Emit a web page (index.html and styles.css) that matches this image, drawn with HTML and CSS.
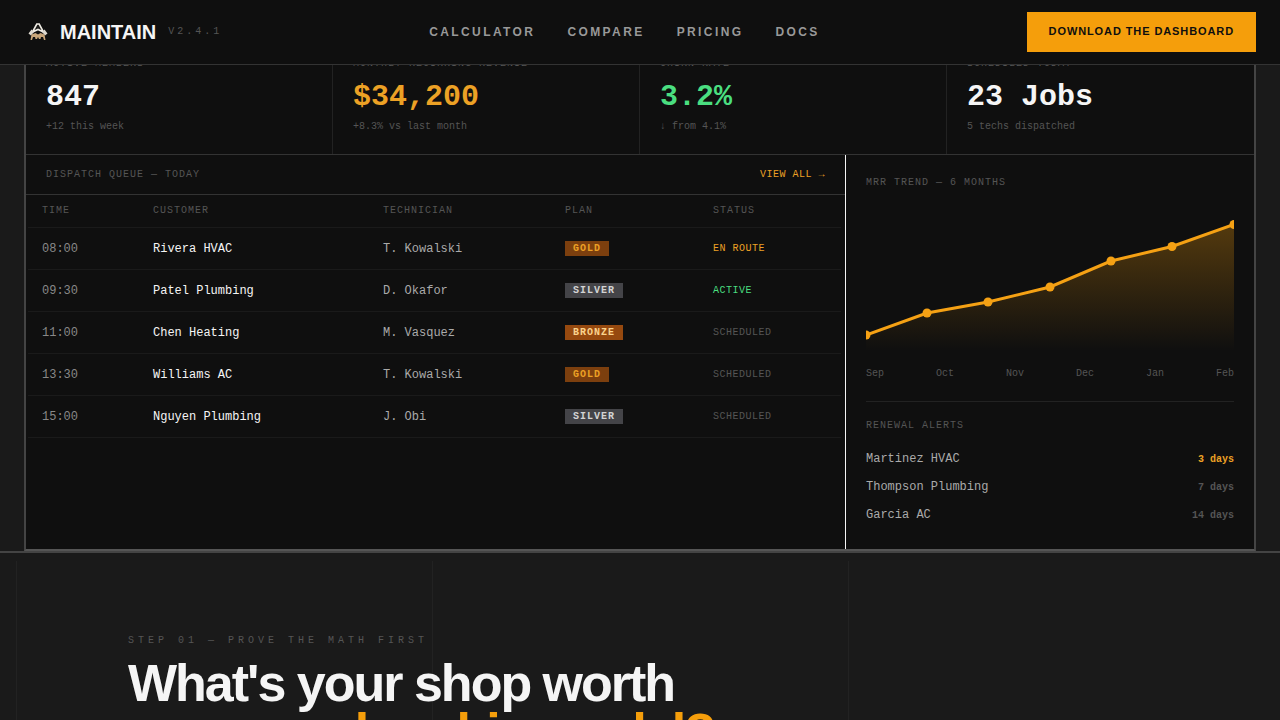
FILE: index.html
```html
<!doctype html>
<html>
<head>
<meta charset="utf-8">
<title>Maintain</title>
<link rel="stylesheet" href="styles.css">
</head>
<body>
<div class="page">
	<header class="navbar">
		<div class="brand">
			<svg class="brandIcon" width="20" height="18" viewBox="0 0 20 18">
				<path d="M4.500 9 L8.800 1 L11.200 1 L15.500 9 L10 6.500 Z" fill="#1c1b19" stroke="#f0ece4" stroke-width="1.600"/>
				<path d="M0.500 10.500 L3.500 6.500 L6 9 L3 12.500 Z" fill="#ded9cf"/>
				<path d="M19.500 10.500 L16.500 6.500 L14 9 L17 12.500 Z" fill="#ded9cf"/>
				<path d="M3.500 11.500 L7.500 10 L10 11.500 L12.500 10 L16.500 11.500 L17.500 17 L16 17 L15 14 L13 14 L12.500 16 L11 16 L10 14 L9 16 L7.500 16 L7 14 L5 14 L4 17 L2.500 17 Z" fill="#c9a67a"/>
			</svg>
			<span class="brandName">MAINTAIN</span>
			<span class="brandVersion">V2.4.1</span>
		</div>
		<nav class="navLinks">
			<a>CALCULATOR</a>
			<a>COMPARE</a>
			<a>PRICING</a>
			<a>DOCS</a>
		</nav>
		<div class="navButton">DOWNLOAD THE DASHBOARD</div>
	</header>

	<section class="dashWrap">
		<div class="dash">
			<div class="statRow">
				<div class="statCell">
					<div class="statLabel">ACTIVE MEMBERS</div>
					<div class="statValue">847</div>
					<div class="statNote">+12 this week</div>
				</div>
				<div class="statCell">
					<div class="statLabel">MONTHLY RECURRING REVENUE</div>
					<div class="statValue amber">$34,200</div>
					<div class="statNote">+8.3% vs last month</div>
				</div>
				<div class="statCell">
					<div class="statLabel">CHURN RATE</div>
					<div class="statValue green">3.2%</div>
					<div class="statNote">↓ from 4.1%</div>
				</div>
				<div class="statCell">
					<div class="statLabel">SCHEDULED TODAY</div>
					<div class="statValue">23 Jobs</div>
					<div class="statNote">5 techs dispatched</div>
				</div>
			</div>
			<div class="dashBody">
				<div class="queue">
					<div class="queueHead">
						<span class="queueTitle">DISPATCH QUEUE — TODAY</span>
						<span class="queueLink">VIEW ALL →</span>
					</div>
					<table class="queueTable">
						<thead>
							<tr><th class="colTime">TIME</th><th class="colCust">CUSTOMER</th><th class="colTech">TECHNICIAN</th><th class="colPlan">PLAN</th><th>STATUS</th></tr>
						</thead>
						<tbody>
							<tr><td class="time">08:00</td><td class="cust">Rivera HVAC</td><td class="tech">T. Kowalski</td><td><span class="badge gold">GOLD</span></td><td class="status route">EN ROUTE</td></tr>
							<tr><td class="time">09:30</td><td class="cust">Patel Plumbing</td><td class="tech">D. Okafor</td><td><span class="badge silver">SILVER</span></td><td class="status active">ACTIVE</td></tr>
							<tr><td class="time">11:00</td><td class="cust">Chen Heating</td><td class="tech">M. Vasquez</td><td><span class="badge bronze">BRONZE</span></td><td class="status">SCHEDULED</td></tr>
							<tr><td class="time">13:30</td><td class="cust">Williams AC</td><td class="tech">T. Kowalski</td><td><span class="badge gold">GOLD</span></td><td class="status">SCHEDULED</td></tr>
							<tr><td class="time">15:00</td><td class="cust">Nguyen Plumbing</td><td class="tech">J. Obi</td><td><span class="badge silver">SILVER</span></td><td class="status">SCHEDULED</td></tr>
						</tbody>
					</table>
				</div>
				<aside class="side">
					<div class="sideLabel">MRR TREND — 6 MONTHS</div>
					<svg class="chart" width="368" height="155" viewBox="0 0 368 155">
						<defs>
							<linearGradient id="chartFill" x1="0" y1="0" x2="0" y2="1">
								<stop offset="0" stop-color="#f59e0b" stop-opacity="0.3"/>
								<stop offset="1" stop-color="#f59e0b" stop-opacity="0"/>
							</linearGradient>
						</defs>
						<path d="M0 132 L61 110 L122 99 L184 84 L245 58 L306 43.500 L368 21.500 L368 148 L0 148 Z" fill="url(#chartFill)"/>
						<path d="M0 132 L61 110 L122 99 L184 84 L245 58 L306 43.500 L368 21.500" fill="none" stroke="#f5a114" stroke-width="3"/>
						<g fill="#f5a114">
							<circle cx="0" cy="132" r="4.500"/>
							<circle cx="61" cy="110" r="4.500"/>
							<circle cx="122" cy="99" r="4.500"/>
							<circle cx="184" cy="84" r="4.500"/>
							<circle cx="245" cy="58" r="4.500"/>
							<circle cx="306" cy="43.500" r="4.500"/>
							<circle cx="368" cy="21.500" r="4.500"/>
						</g>
					</svg>
					<div class="months"><span>Sep</span><span>Oct</span><span>Nov</span><span>Dec</span><span>Jan</span><span>Feb</span></div>
					<div class="renewals">
						<div class="sideLabel renewalLabel">RENEWAL ALERTS</div>
						<div class="renewalRow"><span>Martinez HVAC</span><span class="days soon">3 days</span></div>
						<div class="renewalRow"><span>Thompson Plumbing</span><span class="days">7 days</span></div>
						<div class="renewalRow"><span>Garcia AC</span><span class="days">14 days</span></div>
					</div>
				</aside>
			</div>
		</div>
	</section>

	<section class="calc">
		<div class="calcLines"><i></i><i></i><i></i></div>
		<div class="calcInner">
			<div class="stepLabel">STEP 01 — PROVE THE MATH FIRST</div>
			<h1 class="calcTitle">What's your shop worth<br><span class="amberHead">on a membership model?</span></h1>
		</div>
	</section>
</div>
</body>
</html>
```

FILE: styles.css
```css
* {
	box-sizing: border-box;
}

html, body {
	margin: 0;
	height: 720px;
	overflow: hidden;
	background-color: #1a1a1a;
}

.page {
	display: flex;
	flex-direction: column;
	height: 720px;
	overflow: hidden;
	font-family: "Liberation Mono", monospace;
}

.navbar {
	display: flex;
	flex: none;
	align-items: center;
	justify-content: space-between;
	position: relative;
	z-index: 2;
	height: 65px;
	padding: 0 24px 1px 28px;
	background-color: #0f0f0f;
	border-bottom: 1px solid #333333;
}

.brand {
	display: flex;
	align-items: center;
}

.brandIcon {
	margin-right: 12px;
}

.brandName {
	padding-top: 1px;
	font-family: "Liberation Sans", sans-serif;
	font-size: 20px;
	font-weight: bold;
	color: #f5f5f5;
}

.brandVersion {
	margin-left: 12px;
	font-size: 10px;
	letter-spacing: 3px;
	color: #555555;
}

.navLinks {
	display: flex;
	gap: 32px;
	font-family: "Liberation Sans", sans-serif;
	font-size: 12px;
	font-weight: bold;
	letter-spacing: 2.4px;
	color: #999999;
}

.navButton {
	padding: 13px 22px;
	height: 40px;
	font-family: "Liberation Sans", sans-serif;
	font-size: 11px;
	font-weight: bold;
	letter-spacing: 0.9px;
	color: #0f0f0f;
	background-color: #f59e0b;
}

.dashWrap {
	flex: none;
	height: 501px;
	margin-top: -13px;
	padding: 0 24px;
	border-bottom: 2px solid #444444;
}

.dash {
	display: flex;
	flex-direction: column;
	height: 499px;
	background-color: #0f0f0f;
	border-left: 2px solid #444444;
	border-right: 2px solid #444444;
	border-bottom: 2px solid #555555;
}

.statRow {
	display: grid;
	flex: none;
	grid-template-columns: repeat(4, 1fr);
	height: 103px;
	border-bottom: 1px solid #333333;
}

.statCell {
	padding: 6px 20px 0;
	border-right: 1px solid #222222;
}

.statCell:last-child {
	border-right: none;
}

.statLabel {
	height: 21px;
	font-size: 10px;
	line-height: 12px;
	letter-spacing: 1px;
	color: #555555;
}

.statValue {
	font-size: 30px;
	font-weight: bold;
	line-height: 36px;
	color: #f5f5f5;
}

.amber {
	color: #eca125;
}

.green {
	color: #4ade80;
}

.statNote {
	margin-top: 6px;
	font-size: 10px;
	line-height: 12px;
	color: #555555;
}

.dashBody {
	display: flex;
	flex: 1;
	min-height: 0;
}

.queue {
	width: 820px;
	border-right: 1px solid #f5f5f5;
}

.queueHead {
	display: flex;
	align-items: center;
	justify-content: space-between;
	height: 40px;
	padding: 0 20px;
	border-bottom: 1px solid #333333;
	font-size: 10px;
	letter-spacing: 1px;
}

.queueTitle {
	color: #555555;
}

.queueLink {
	letter-spacing: 0.5px;
	color: #eca125;
}

.queueTable {
	width: 813px;
	margin-left: 2px;
	table-layout: fixed;
	border-collapse: collapse;
}

.queueTable th {
	height: 32px;
	padding: 0 16px;
	font-size: 10px;
	font-weight: normal;
	text-align: left;
	letter-spacing: 1px;
	color: #555555;
	border-bottom: 1px solid #1a1a1a;
}

.queueTable td {
	height: 42px;
	padding: 0 16px;
	font-size: 12px;
	border-bottom: 1px solid #1a1a1a;
}

.queueTable th:first-child,
.queueTable td:first-child {
	padding-left: 14px;
}

.colTime {
	width: 109px;
}

.colCust {
	width: 230px;
}

.colTech {
	width: 182px;
}

.colPlan {
	width: 148px;
}

.queueTable td.time {
	padding-top: 1px;
	color: #888888;
}

.queueTable td.cust {
	padding-top: 1px;
	color: #f5f5f5;
}

.queueTable td.tech {
	padding-top: 1px;
	color: #aaaaaa;
}

.badge {
	display: inline-block;
	padding: 2px 8px;
	font-size: 10px;
	font-weight: bold;
	line-height: 11px;
	letter-spacing: 1px;
}

.gold {
	color: #eca125;
	background-color: #7c3f0e;
}

.silver {
	color: #d4d4d4;
	background-color: #444448;
}

.bronze {
	color: #fbd38d;
	background-color: #96490f;
}

.queueTable td.status {
	font-size: 10px;
	letter-spacing: 0.5px;
	color: #555555;
}

.queueTable td.route {
	color: #eca125;
}

.queueTable td.active {
	color: #4ade80;
}

.side {
	flex: 1;
	min-width: 0;
	padding: 22px 20px 0;
}

.sideLabel {
	font-size: 10px;
	line-height: 12px;
	letter-spacing: 1px;
	color: #555555;
}

.chart {
	display: block;
	margin-top: 14px;
	overflow: hidden;
}

.months {
	display: flex;
	justify-content: space-between;
	margin-top: 10px;
	font-size: 10px;
	line-height: 12px;
	color: #555555;
}

.renewals {
	margin-top: 21px;
	padding-top: 18px;
	border-top: 1px solid #222222;
}

.renewalLabel {
	margin-bottom: 13px;
}

.renewalRow {
	display: flex;
	align-items: center;
	justify-content: space-between;
	height: 28px;
	font-size: 12px;
	color: #aaaaaa;
}

.days {
	font-size: 10px;
	font-weight: bold;
	color: #555555;
}

.soon {
	color: #eca125;
}

.calc {
	position: relative;
	flex: 1;
	min-height: 0;
	overflow: hidden;
	padding: 82px 128px 0;
	background-color: #1a1a1a;
}

.calcLines {
	position: absolute;
	top: 8px;
	left: 16px;
	bottom: 0;
	display: flex;
	gap: 415px;
}

.calcLines i {
	width: 1px;
	background-color: #222222;
}

.calcInner {
	position: relative;
}

.stepLabel {
	font-size: 10px;
	line-height: 12px;
	letter-spacing: 4px;
	color: #555555;
}

.calcTitle {
	margin: 12px 0 0;
	font-family: "Liberation Sans", sans-serif;
	font-size: 52px;
	font-weight: bold;
	line-height: 49.4px;
	letter-spacing: -2px;
	color: #f5f5f5;
}

.amberHead {
	color: #f59e0b;
}
```
